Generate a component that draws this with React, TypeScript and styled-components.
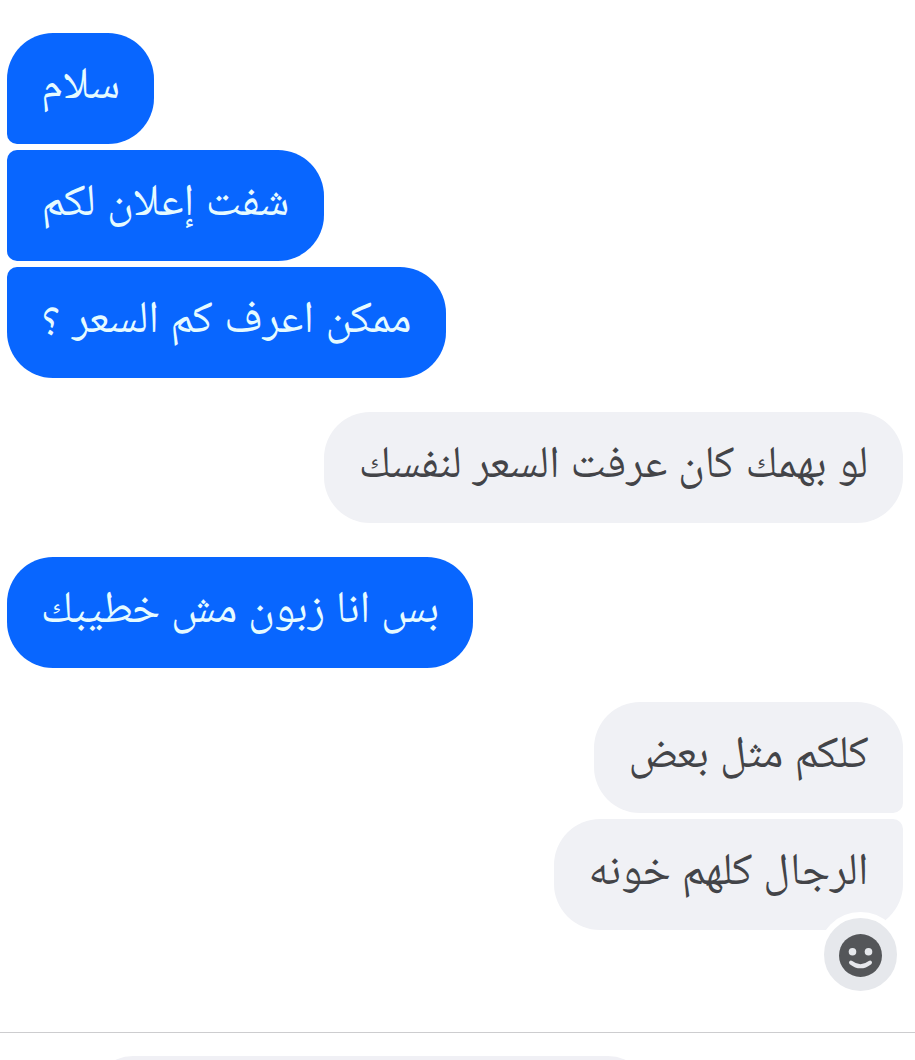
import React from 'react';
import styled, { createGlobalStyle } from 'styled-components';

const GlobalStyle = createGlobalStyle`
  *, *::before, *::after { box-sizing: border-box; }
  body { margin: 0; background: #fff; overflow: hidden; }
`;

type Side = 'start' | 'end';
type Joint = 'first' | 'middle' | 'last' | 'single';

const Screen = styled.main`
  display: flex;
  flex-direction: column;
  height: 1060px;
  overflow: hidden;
  background: #fff;
`;

const Thread = styled.section`
  display: flex;
  flex-direction: column;
  flex: none;
  gap: 34px;
  height: 1032px;
  padding: 33px 12px 0 7px;
`;

const Group = styled.div<{ $side: Side }>`
  display: flex;
  flex-direction: column;
  gap: 6px;
  align-items: ${(p) => (p.$side === 'start' ? 'flex-start' : 'flex-end')};
`;

const corners = (side: Side, joint: Joint) => {
  const top = joint === 'middle' || joint === 'last' ? 10 : 46;
  const bottom = joint === 'middle' || joint === 'first' ? 10 : 46;
  return side === 'start'
    ? `${top}px 46px 46px ${bottom}px`
    : `46px ${top}px ${bottom}px 46px`;
};

const Bubble = styled.div<{ $side: Side; $joint: Joint; $width: number }>`
  position: relative;
  display: flex;
  align-items: center;
  justify-content: center;
  width: ${(p) => p.$width}px;
  height: 111px;
  border-radius: ${(p) => corners(p.$side, p.$joint)};
  background: ${(p) => (p.$side === 'start' ? '#0866ff' : '#f0f1f5')};
  color: ${(p) => (p.$side === 'start' ? '#e6fbff' : '#434448')};
`;

const Text = styled.span<{ $spacing: number }>`
  font: 400 45px/111px 'Noto Naskh Arabic', 'DejaVu Sans', sans-serif;
  word-spacing: ${(p) => p.$spacing}px;
  direction: rtl;
  white-space: nowrap;
`;

const ReactButton = styled.button`
  position: absolute;
  right: 0;
  bottom: -67px;
  display: flex;
  align-items: center;
  justify-content: center;
  width: 85px;
  height: 85px;
  padding: 1px 0 0;
  border: 6px solid #fff;
  border-radius: 50%;
  background: #e6e8ec;
`;

const Composer = styled.footer`
  flex: none;
  height: 120px;
  padding: 23px 265px 0 91px;
  border-top: 1px solid #cdcdcf;
`;

const Field = styled.div`
  height: 84px;
  border-radius: 42px;
  background: #f0f0f5;
`;

const Smile = () => (
  <svg width="43" height="43" viewBox="0 0 43 43" aria-hidden="true">
    <circle cx="21.5" cy="21.5" r="21.5" fill="#545659" />
    <circle cx="13.5" cy="17.8" r="3.8" fill="#e6e8ec" />
    <circle cx="29.5" cy="17.8" r="3.8" fill="#e6e8ec" />
    <path d="M12 28.6Q21.5 36 31 28.6" fill="none" stroke="#e6e8ec" strokeWidth="4" strokeLinecap="round" />
  </svg>
);

interface Message { text: string; width: number; joint: Joint; spacing?: number; reaction?: boolean }

const groups: { side: Side; messages: Message[] }[] = [
  { side: 'start', messages: [
    { text: 'سلام', width: 147, joint: 'first' },
    { text: 'شفت إعلان لكم', width: 317, joint: 'middle', spacing: 1.5 },
    { text: 'ممكن اعرف كم السعر ؟', width: 439, joint: 'last', spacing: 1.5 },
  ] },
  { side: 'end', messages: [{ text: 'لو بهمك كان عرفت السعر لنفسك', width: 579, joint: 'single', spacing: 1 }] },
  { side: 'start', messages: [{ text: 'بس انا زبون مش خطيبك', width: 466, joint: 'single', spacing: 0.8 }] },
  { side: 'end', messages: [
    { text: 'كلكم مثل بعض', width: 309, joint: 'first', spacing: 1.2 },
    { text: 'الرجال كلهم خونه', width: 349, joint: 'last', spacing: 1, reaction: true },
  ] },
];

export default function App() {
  return (
    <Screen>
      <GlobalStyle />
      <Thread>
        {groups.map((group, i) => (
          <Group key={i} $side={group.side}>
            {group.messages.map((m) => (
              <Bubble key={m.text} $side={group.side} $joint={m.joint} $width={m.width}>
                <Text $spacing={m.spacing ?? 0}>{m.text}</Text>
                {m.reaction && <ReactButton aria-label="تفاعل"><Smile /></ReactButton>}
              </Bubble>
            ))}
          </Group>
        ))}
      </Thread>
      <Composer><Field /></Composer>
    </Screen>
  );
}
